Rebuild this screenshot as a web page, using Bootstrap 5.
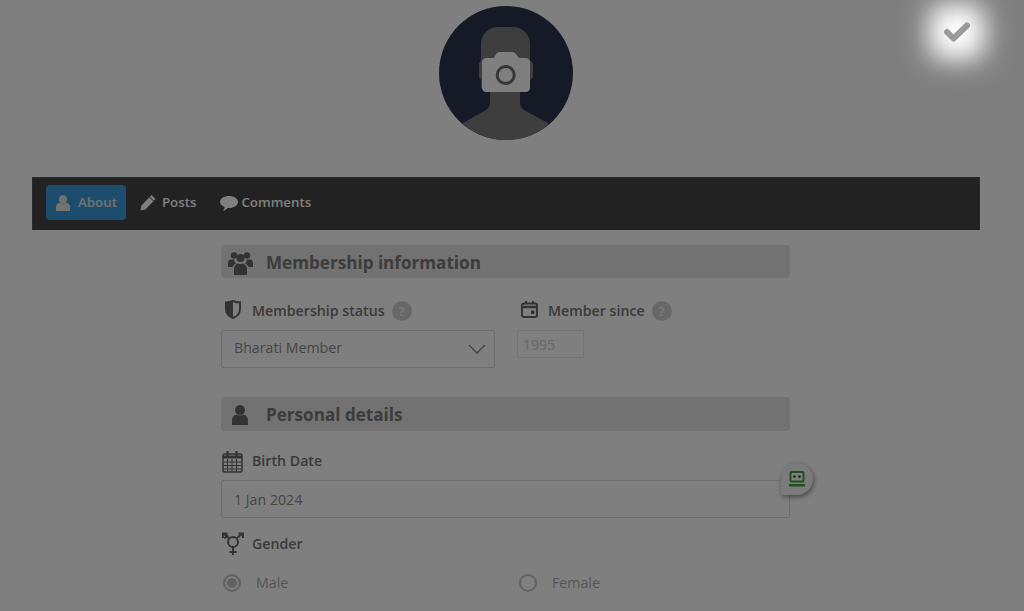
<!DOCTYPE html>
<html lang="en">

<head>
    <meta charset="UTF-8">
    <meta name="viewport" content="width=device-width, initial-scale=1.0">
    <title>Edit profile</title>
    <link href="https://cdn.jsdelivr.net/npm/bootstrap@5.3.0/dist/css/bootstrap.min.css" rel="stylesheet">
    <script src="https://cdn.jsdelivr.net/npm/bootstrap@5.3.0/dist/js/bootstrap.bundle.min.js"></script>
    <style>
        html, body {
            height: 611px;
            overflow: hidden;
        }

        body {
            background: #fff;
            font-family: "Open Sans", sans-serif;
            color: #747474;
        }

        /* dim layer over the whole page */
        .dim-layer {
            position: fixed;
            inset: 0;
            background: rgba(0, 0, 0, .5);
            z-index: 10;
        }

        .save-btn {
            position: fixed;
            left: 929px;
            top: 4px;
            width: 56px;
            height: 56px;
            z-index: 20;
        }

        /* soft white glow behind the check */
        .save-btn::before {
            content: "";
            position: absolute;
            inset: 0;
            border-radius: 14px;
            background: #fff;
            filter: blur(13px);
        }

        .save-btn svg {
            position: relative;
        }

        .page-wrap {
            padding-top: 6px;
        }

        .avatar-pic {
            display: block;
            width: 134px;
            height: 134px;
            margin: 0 0 37px 439px;
        }

        .profile-nav {
            width: 948px;
            height: 53px;
            margin: 0 0 15px 32px;
            padding: 0 13px 3px;
            background: #444;
            border: 1px solid #555;
            border-bottom: 0;
            gap: 14px;
        }

        .profile-nav .nav-item-link {
            height: 35px;
            padding-right: 10px;
            color: #fff;
            font-size: 13.3px;
            font-weight: 600;
            gap: 6px;
            text-decoration: none;
        }

        .profile-nav .nav-item-link.active {
            background: #3b9bd8;
            border-radius: 4px;
            padding: 0 9px 0 10px;
            gap: 8px;
            color: #e4e4e4;
        }

        .profile-nav .nav-item-link.tight {
            gap: 3px;
        }

        .form-col {
            width: 569px;
            margin-left: 221px;
        }

        .section-bar {
            height: 33px;
            padding-top: 2px;
            background: #e4e4e4;
            border-radius: 4px;
            font-size: 17.1px;
            font-weight: 700;
            color: #787878;
        }

        .section-bar.tall {
            height: 34px;
            padding-top: 1px;
            margin-top: 29px;
        }

        .section-icon {
            width: 38px;
            margin-right: 7px;
            flex: none;
        }

        .field-label {
            height: 22px;
            margin-bottom: 8px;
            font-size: 14.2px;
            font-weight: 600;
            color: #747474;
        }

        .label-icon {
            width: 31px;
            flex: none;
        }

        .help-dot {
            width: 20px;
            height: 20px;
            margin-left: 7px;
            border-radius: 50%;
            background: #d0d0d0;
            color: #f0f0f0;
            font-size: 13px;
            font-weight: 700;
            line-height: 20px;
            text-align: center;
        }

        .fields-row {
            margin-top: 22px;
        }

        .birth-label {
            margin-top: 19px;
        }

        .text-box {
            height: 38px;
            border-color: #dcdcdc;
            border-radius: 2px;
            color: #8a8a8a;
            font-size: 14.2px;
            padding: 0 12px;
            box-shadow: none;
        }

        select.text-box {
            width: 274px;
            padding-bottom: 3px;
            background-image: url("data:image/svg+xml,%3csvg xmlns='http://www.w3.org/2000/svg' viewBox='0 0 18 10'%3e%3cpath fill='none' stroke='%23909090' stroke-width='1.500' d='M1 1l8 8 8-8'/%3e%3c/svg%3e");
            background-size: 18px 10px;
            background-position: right 8px center;
        }

        .year-box {
            width: 67px;
            height: 28px;
            border: 1px solid #e8e8e8;
            background: #fff;
            color: #d0d0d0;
            font-size: 14px;
            padding: 0 5px;
            margin-top: 1px;
            border-radius: 0;
        }

        .second-col {
            margin-left: 22px;
        }

        .date-wrap {
            position: relative;
            margin-bottom: 15px;
        }

        .pin-btn {
            position: absolute;
            right: -23px;
            top: -17px;
            width: 32px;
            height: 32px;
            background: #f6f6f6;
            border-radius: 50% 50% 50% 2px;
            box-shadow: 1px 2px 5px rgba(0, 0, 0, .45);
            z-index: 2;
        }

        .radio-row {
            height: 22px;
            margin-top: 17px;
            font-size: 14.2px;
            color: #aaa;
        }

        .radio-cell {
            width: 296px;
            flex: none;
            padding-left: 2px;
            gap: 15px;
        }

        .radio-cell .form-check-input {
            width: 18px;
            height: 18px;
            margin: 0;
            background-color: #fff;
            background-image: none;
            border: 2px solid #c4c4c4;
            box-shadow: none;
            opacity: 1;
        }

        .radio-cell .form-check-input:checked {
            background-color: #c4c4c4;
            box-shadow: inset 0 0 0 2px #fff;
        }
    </style>
</head>

<body>
    <div class="dim-layer"></div>
    <div class="save-btn d-flex align-items-center justify-content-center">
        <svg width="28" height="24" viewBox="0 0 28 24"><path d="M4 12l6.500 6.500L24 5.500" fill="none" stroke="#9a9a9a" stroke-width="6" stroke-linecap="round" stroke-linejoin="round"/></svg>
    </div>

    <div class="page-wrap">
        <!-- Profile picture -->
        <svg class="avatar-pic" viewBox="0 0 134 134">
            <defs><clipPath id="avClip"><circle cx="67" cy="67" r="67"/></clipPath></defs>
            <circle cx="67" cy="67" r="67" fill="#2a344c"/>
            <g clip-path="url(#avClip)" fill="#7a7c7a">
                <path d="M42 54V38c0-10 8-17 17-17h15c9 0 17 7 17 17v16l3 3v14l-3 3v8H42v-8l-2-3V57z"/>
                <path d="M51 80h30v17c0 3 1 5 4 7l24 13v17H24v-17l23-13c3-2 4-4 4-7z"/>
            </g>
            <path d="M47 52h8l2-4c1-1 2-2 4-2h12c2 0 3 1 4 2l3 4h7c2 0 4 2 4 4v26c0 2-2 4-4 4H47c-2 0-4-2-4-4V56c0-2 2-4 4-4z" fill="#fff"/>
            <circle cx="66.700" cy="69" r="8.500" fill="none" stroke="#6e6e6e" stroke-width="3"/>
        </svg>

        <!-- Tabs -->
        <nav class="profile-nav d-flex align-items-center">
            <a class="nav-item-link active d-flex align-items-center" href="#">
                <svg width="14" height="16" viewBox="0 0 14 16"><circle cx="7" cy="4.200" r="4" fill="#e4e4e4"/><path d="M0 16v-3.500C0 9.500 2 8 4 7.500c2 1.300 4 1.300 6 0 2 .5 4 2 4 5V16z" fill="#e4e4e4"/></svg>
                About
            </a>
            <a class="nav-item-link d-flex align-items-center" href="#">
                <svg width="16" height="17" viewBox="0 0 16 17"><path d="M11.500 1l4 4L5.500 15.500 .5 16.500l1-5z" fill="#fff"/><path d="M9.500 3l4 4" stroke="#444" stroke-width="1"/></svg>
                Posts
            </a>
            <a class="nav-item-link tight d-flex align-items-center" href="#">
                <svg width="18" height="16" viewBox="0 0 18 16"><path d="M9 1c5 0 9 2.600 9 6s-4 6-9 6l-1.500-.1C6.500 14.500 4.500 15.500 3 15.600c1-1 1.500-2.200 1.600-3.600C2 11 0 9.200 0 7c0-3.400 4-6 9-6z" fill="#fff"/></svg>
                Comments
            </a>
        </nav>

        <div class="form-col">
            <!-- Membership -->
            <div class="section-bar d-flex align-items-center">
                <span class="section-icon"><svg width="25" height="24" viewBox="0 0 25 24" class="d-block mx-auto" fill="#666"><circle cx="6" cy="4.500" r="3.200"/><circle cx="19" cy="4.500" r="3.200"/><circle cx="12.500" cy="7" r="4"/><path d="M0 16v-4c0-2 1-3.500 3-3.500h3c.3 2 1 3 2 4-2 .8-3 2-3.400 3.500zM25 16v-4c0-2-1-3.500-3-3.500h-3c-.3 2-1 3-2 4 2 .8 3 2 3.400 3.500z"/><path d="M6 24v-6c0-3 2-5 4-5.500 1.500.8 3.500.8 5 0 2 .5 4 2.500 4 5.500v6z"/></svg></span>
                Membership information
            </div>

            <div class="fields-row d-flex">
                <div>
                    <div class="field-label d-flex align-items-center">
                        <span class="label-icon"><svg class="d-block ms-1 mb-1" width="16" height="19" viewBox="0 0 16 19"><path d="M1 2.500C3.500 2.500 6 2 8 1c2 1 4.500 1.500 7 1.500V9c0 4-3 7.500-7 9-4-1.500-7-5-7-9z" fill="none" stroke="#666" stroke-width="2"/><path d="M8 1C6 2 3.500 2.500 1 2.500V9c0 4 3 7.500 7 9z" fill="#666"/></svg></span>
                        Membership status
                        <span class="help-dot">?</span>
                    </div>
                    <select class="form-select text-box">
                        <option>Bharati Member</option>
                    </select>
                </div>
                <div class="second-col">
                    <div class="field-label d-flex align-items-center">
                        <span class="label-icon"><svg class="d-block ms-1 mb-1" width="17" height="17" viewBox="0 0 17 17"><rect x="1" y="2.500" width="15" height="13.500" rx="2" fill="none" stroke="#666" stroke-width="2"/><path d="M1 6h15" stroke="#666" stroke-width="2.500"/><path d="M5 0v3M12 0v3" stroke="#666" stroke-width="2"/><rect x="10" y="9.500" width="3.500" height="3.500" fill="#666"/></svg></span>
                        Member since
                        <span class="help-dot">?</span>
                    </div>
                    <input class="year-box d-block" type="text" value="1995" disabled>
                </div>
            </div>

            <!-- Personal details -->
            <div class="section-bar tall d-flex align-items-center">
                <span class="section-icon"><svg width="18" height="20" viewBox="0 0 18 20" class="d-block mx-auto" fill="#666"><circle cx="9" cy="5" r="5"/><path d="M1 20v-4c0-4 2-6 5-6.500 2 1.300 4 1.300 6 0 3 .5 5 2.500 5 6.500v4z"/></svg></span>
                Personal details
            </div>

            <div class="field-label birth-label d-flex align-items-center">
                <span class="label-icon"><svg class="d-block" width="22" height="23" viewBox="0 0 22 23" fill="none" stroke="#666"><rect x="2" y="4" width="19" height="18" rx="1.500" stroke-width="1.500"/><path d="M2 7h19" stroke-width="3"/><path d="M2 12h19M2 15.500h19M2 19h19M6.500 9v13M11 9v13M15.500 9v13" stroke-width="1"/><path d="M6.500 1v5M15.500 1v5" stroke-width="2.200"/></svg></span>
                Birth Date
            </div>
            <div class="date-wrap">
                <input class="form-control text-box" type="text" value="1 Jan 2024">
                <div class="pin-btn d-flex align-items-center justify-content-center">
                    <svg width="16" height="16" viewBox="0 0 16 16"><rect x="1.500" y="1" width="13" height="9.500" rx="1" fill="#fff" stroke="#3da33d" stroke-width="2"/><circle cx="5.500" cy="5.500" r="1.300" fill="#333"/><circle cx="10.500" cy="5.500" r="1.300" fill="#333"/><rect x="0" y="13" width="16" height="2.500" fill="#3da33d"/></svg>
                </div>
            </div>

            <div class="field-label d-flex align-items-center mb-0">
                <span class="label-icon"><svg class="d-block" width="24" height="24" viewBox="0 0 24 24" fill="none" stroke="#666" stroke-width="2"><circle cx="12" cy="10" r="5"/><path d="M12 15v8M8.500 20h7M16 6l5-4M17.500 1.500H22V6M8 6L3 2M6.500 1.500H2V6M3.500 6.500L7 3"/></svg></span>
                Gender
            </div>
            <div class="radio-row d-flex">
                <label class="radio-cell d-flex align-items-center"><input class="form-check-input" type="radio" name="gender" checked disabled> Male</label>
                <label class="radio-cell d-flex align-items-center"><input class="form-check-input" type="radio" name="gender" disabled> Female</label>
            </div>
        </div>
    </div>
</body>

</html>
